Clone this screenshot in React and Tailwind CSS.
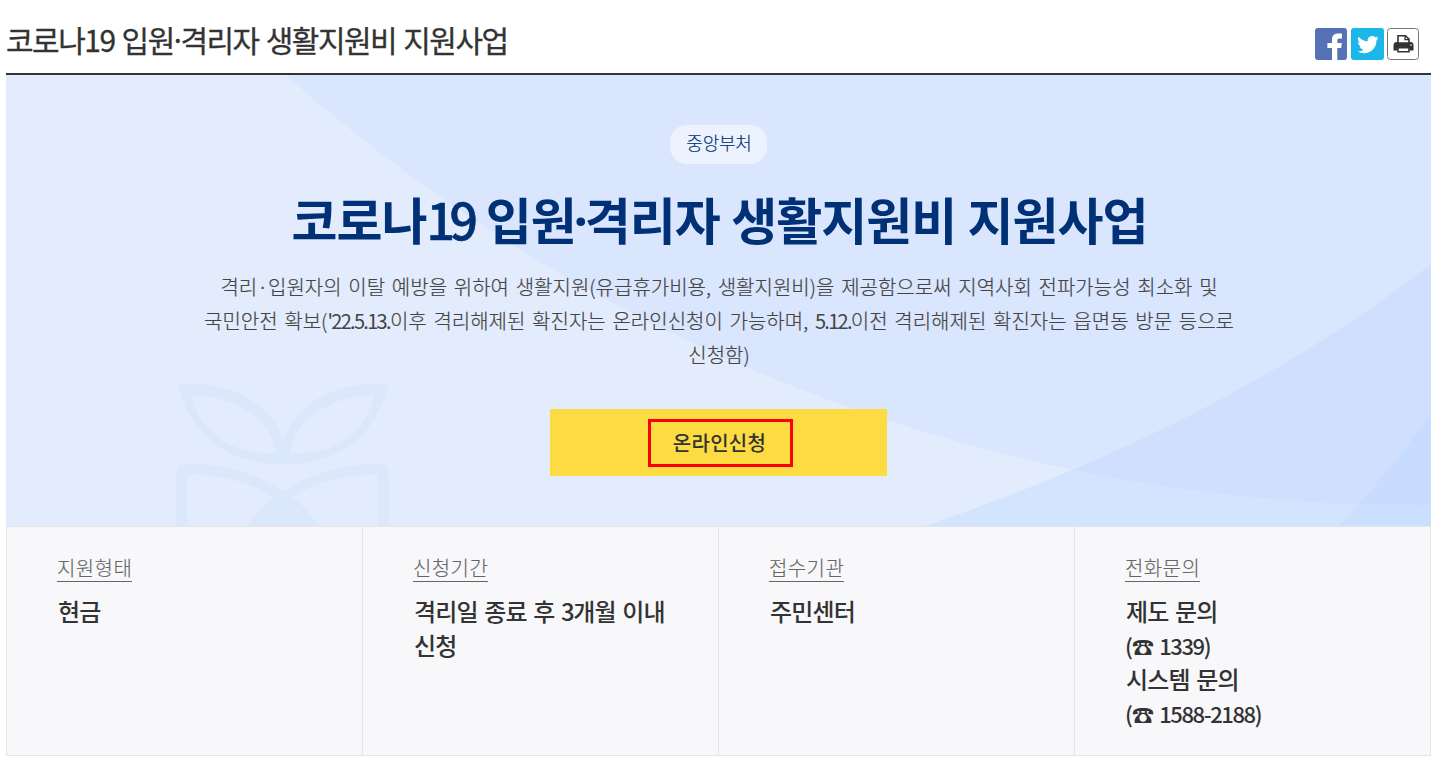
const DESCRIPTION = [
  '격리·입원자의 이탈 예방을 위하여 생활지원(유급휴가비용, 생활지원비)을 제공함으로써 지역사회 전파가능성 최소화 및',
  "국민안전 확보('22.5.13.이후 격리해제된 확진자는 온라인신청이 가능하며, 5.12.이전 격리해제된 확진자는 읍면동 방문 등으로",
  '신청함)',
];

const INFO = [
  { label: '지원형태', lines: ['현금'] },
  { label: '신청기간', lines: ['격리일 종료 후 3개월 이내', '신청'] },
  { label: '접수기관', lines: ['주민센터'] },
  { label: '전화문의', lines: ['제도 문의', '(☎ 1339)', '시스템 문의', '(☎ 1588-2188)'] },
];

// digits and latin punctuation are set tighter than the hangul around them
function Mixed({ text, className }) {
  return text.split(/([0-9'.-]+)/).map((part, i) =>
    i % 2 ? <span key={i} className={className}>{part}</span> : part
  );
}

function FacebookIcon() {
  return (
    <svg className="w-8 h-8" viewBox="0 0 32 32">
      <rect width="32" height="32" rx="3" fill="#5472b5" />
      <path fill="#fff" d="M17 32V20h-4.600v-5H17v-3.400C17 7.600 19.400 5.600 23 5.600h4v4.800h-2.400c-1.700 0-2.300.7-2.300 2.200V15h4.500l-.6 5h-3.900v12z" />
    </svg>
  );
}

function TwitterIcon() {
  return (
    <svg className="w-[33px] h-8" viewBox="0 0 33 32">
      <rect width="33" height="32" rx="3" fill="#1bb7ea" />
      <path
        fill="#fff"
        transform="translate(5.400 5.400) scale(.94)"
        d="M23.643 4.937c-.835.37-1.732.62-2.675.733a4.670 4.670 0 0 0 2.048-2.578 9.300 9.300 0 0 1-2.958 1.130 4.660 4.660 0 0 0-7.938 4.250 13.229 13.229 0 0 1-9.602-4.868 4.660 4.660 0 0 0 1.442 6.220 4.647 4.647 0 0 1-2.110-.583v.06a4.660 4.660 0 0 0 3.737 4.568 4.692 4.692 0 0 1-2.104.080 4.661 4.661 0 0 0 4.352 3.234 9.348 9.348 0 0 1-5.786 1.995 9.500 9.500 0 0 1-1.112-.065 13.175 13.175 0 0 0 7.140 2.093c8.570 0 13.255-7.098 13.255-13.254 0-.2-.005-.402-.014-.602a9.470 9.470 0 0 0 2.323-2.410z"
      />
    </svg>
  );
}

function PrintIcon() {
  return (
    <svg className="-ml-px w-8 h-8" viewBox="0 0 32 32">
      <rect x=".5" y=".5" width="31" height="31" rx="3" fill="#fff" stroke="#777" />
      <path fill="#333" d="M9 14h14.500a3 3 0 0 1 3 3v5.500h-4V20h-12v2.500h-4V17a3 3 0 0 1 2.500-3z" />
      <path fill="#fff" stroke="#333" strokeWidth="1.600" d="M11 15V7.800h7.500l3.500 3.400V15z" />
      <path fill="none" stroke="#333" strokeWidth="1.300" d="M18 8v3.700h4" />
      <path fill="#fff" stroke="#333" strokeWidth="1.600" d="M11 19.800h11v4H11z" />
      <circle cx="24" cy="17" r=".8" fill="#fff" />
    </svg>
  );
}

function HeroBackground() {
  return (
    <svg className="absolute inset-0 w-full h-full" viewBox="0 0 1425 451" preserveAspectRatio="none">
      <defs>
        <clipPath id="sweep">
          <circle cx="1414" cy="-1279.500" r="1710" />
        </clipPath>
      </defs>
      <rect width="1425" height="451" fill="#e2ecfd" />
      <path fill="#d3e4ff" d="M1428 187Q1221 348 919 451H1428z" />
      <path fill="#cbdfff" d="M1428 335Q1385 396 1332 451H1428z" />
      <g clipPath="url(#sweep)">
        <rect width="1425" height="451" fill="#dae6fd" />
        <path fill="#d0dffd" d="M1428 187Q1221 348 919 451H1428z" />
        <path fill="#c7dcff" d="M1428 335Q1385 396 1332 451H1428z" />
      </g>
      <g transform="translate(154 295.500) scale(.33333)" fill="#dbe8fc" fillRule="evenodd">
        <path d="M54 40C200 32 325 85 370 208C415 85 540 32 686 40C650 190 545 282 370 282C195 282 90 190 54 40ZM93 74C220 75 335 140 347 248C215 252 125 190 93 74ZM644 74C520 75 405 140 391 248C525 252 613 190 644 74Z" />
        <path d="M49 470V312Q49 278 83 278C190 280 290 308 370 362C450 308 550 280 653 278Q686 278 686 312V470H654V311C560 315 470 330 398 381Q440 410 480 470H257Q300 415 340 381C260 330 180 313 82 311V470Z" />
      </g>
    </svg>
  );
}

export default function App() {
  return (
    <div className="w-[1434px] h-[780px] bg-white pl-[6px] pr-[3px] font-['Noto_Sans_CJK_KR','Noto_Sans',sans-serif] text-[#333] whitespace-nowrap">
      <header className="h-[75px] flex items-start justify-between border-b-2 border-[#333] pr-3">
        <h1 className="mt-[17px] text-[30px] leading-[44px] font-normal tracking-[-1.5px] [word-spacing:1.8px] [-webkit-text-stroke:0.3px]">
          코로나19 입원<span className="font-['Noto_Sans']">·</span>격리자 생활지원비 지원사업
        </h1>
        <div className="mt-7 flex gap-1">
          <FacebookIcon />
          <TwitterIcon />
          <PrintIcon />
        </div>
      </header>

      <section className="relative h-[451px]">
        <HeroBackground />
        <div className="relative h-full flex flex-col items-center pt-[50px]">
          <span className="w-[97px] h-[39px] rounded-[17px] bg-[#ecf3fe] pl-px text-center text-[18px] leading-[35px] font-light tracking-[-0.2px] text-[#003076] [-webkit-text-stroke:0.15px]">
            중앙부처
          </span>
          <h2 className="mt-[18px] h-[74px] pl-[2px] text-[50px] leading-[73px] font-bold tracking-[-1px] [word-spacing:1px] text-[#003076]">
            코로나<span className="mr-[2px] font-medium tracking-[-5.5px] [-webkit-text-stroke:0.6px]">19</span> 입원
            <span className="-ml-[2px] font-['Noto_Sans'] tracking-[-3px]">·</span>격리자 생활지원비 지원사업
          </h2>
          <div className="mt-[14px] pl-px text-center text-[20px] leading-[34px] font-light [word-spacing:2.3px] text-[#444] [-webkit-text-stroke:0.2px]">
            {DESCRIPTION.map((line) => (
              <p key={line}>
                <Mixed text={line} className="tracking-[-1.7px] font-normal [-webkit-text-stroke:0px]" />
              </p>
            ))}
          </div>
          <button className="mt-[37px] w-[337px] h-[67px] flex items-center justify-center bg-[#fddc43]">
            <span className="w-[145px] h-[48px] ml-[3px] border-[3px] border-[#ff0000] pr-px text-center text-[20px] leading-[41px] font-medium tracking-[0.3px]">
              온라인신청
            </span>
          </button>
        </div>
      </section>

      <section className="h-[230px] grid grid-cols-[356px_356px_356px_1fr] border border-[#e5e5e9] bg-[#f8f8fb] divide-x divide-[#e5e5e9]">
        {INFO.map((item) => (
          <div key={item.label} className="pl-[50px] pt-[26px]">
            <span className="inline-block h-[29px] border-b border-[#666] text-[20px] leading-[29px] font-light tracking-[0.4px] text-[#666] [-webkit-text-stroke:0.15px]">
              {item.label}
            </span>
            <div className="mt-[12px] pl-px text-[24px] leading-[34px] font-medium tracking-[-0.8px] [word-spacing:1.8px]">
              {item.lines.map((line) => (
                <p key={line} className={line.startsWith('(') ? 'h-[34px] -ml-px text-[22px] leading-[34px]' : 'h-[34px]'}>
                  <Mixed text={line} className="tracking-[-1.4px]" />
                </p>
              ))}
            </div>
          </div>
        ))}
      </section>
    </div>
  );
}
